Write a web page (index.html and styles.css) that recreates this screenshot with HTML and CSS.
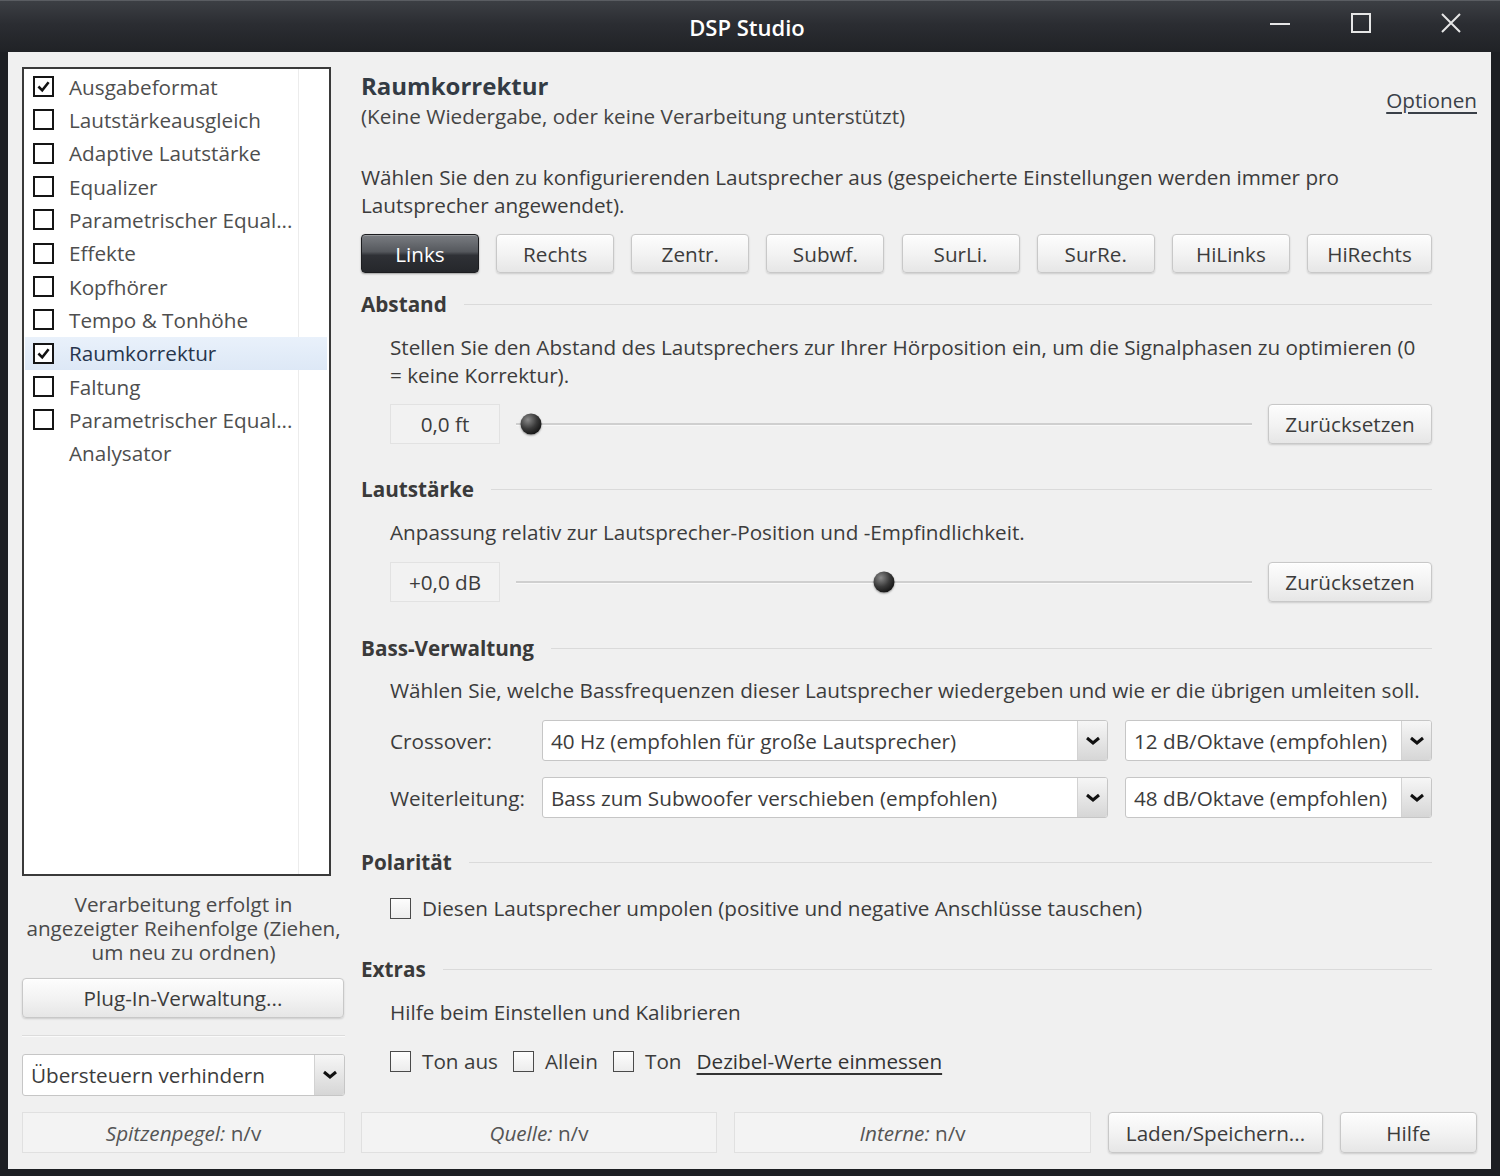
FILE: index.html
```html
<!DOCTYPE html>
<html lang="de">
<head>
<meta charset="utf-8">
<title>DSP Studio</title>
<link rel="stylesheet" href="styles.css">
</head>
<body>
<div class="window">
  <header class="titlebar">
    <div class="title">DSP Studio</div>
    <div class="controls">
      <div class="ctl"><svg width="22" height="22" viewBox="0 0 22 22"><path d="M1 12 H21" stroke="#e6e6e6" stroke-width="2"/></svg></div>
      <div class="ctl"><svg width="22" height="22" viewBox="0 0 22 22"><rect x="2" y="2" width="18" height="18" fill="none" stroke="#e6e6e6" stroke-width="2"/></svg></div>
      <div class="ctl close"><svg width="22" height="22" viewBox="0 0 22 22"><path d="M2 2 L20 20 M20 2 L2 20" stroke="#e6e6e6" stroke-width="2"/></svg></div>
    </div>
  </header>

  <div class="client">
    <aside class="left">
      <ul class="plugin-list">
        <li><span class="lcb checked"><svg viewBox="0 0 20 20"><path d="M4 10 L8.5 14.5 L16 5" fill="none" stroke="#111" stroke-width="3"/></svg></span>Ausgabeformat</li>
        <li><span class="lcb"></span>Lautstärkeausgleich</li>
        <li><span class="lcb"></span>Adaptive Lautstärke</li>
        <li><span class="lcb"></span>Equalizer</li>
        <li><span class="lcb"></span>Parametrischer Equal...</li>
        <li><span class="lcb"></span>Effekte</li>
        <li><span class="lcb"></span>Kopfhörer</li>
        <li><span class="lcb"></span>Tempo &amp; Tonhöhe</li>
        <li class="selected"><span class="lcb checked"><svg viewBox="0 0 20 20"><path d="M4 10 L8.5 14.5 L16 5" fill="none" stroke="#111" stroke-width="3"/></svg></span>Raumkorrektur</li>
        <li><span class="lcb"></span>Faltung</li>
        <li><span class="lcb"></span>Parametrischer Equal...</li>
        <li><span class="lcb none"></span>Analysator</li>
      </ul>
      <p class="hint">Verarbeitung erfolgt in<br>angezeigter Reihenfolge (Ziehen,<br>um neu zu ordnen)</p>
      <button class="btn plug">Plug-In-Verwaltung...</button>
      <div class="sep"></div>
      <div class="select sel-left">
        <span class="val">Übersteuern verhindern</span>
        <span class="arrow"><svg width="16" height="10" viewBox="0 0 16 10"><path d="M2 2 L8 7 L14 2" fill="none" stroke="#111" stroke-width="3"/></svg></span>
      </div>
      <div class="status"><i>Spitzenpegel:</i>&nbsp;n/v</div>
    </aside>

    <main class="right">
      <div class="head">
        <div>
          <h1 class="h-title">Raumkorrektur</h1>
          <div class="sub">(Keine Wiedergabe, oder keine Verarbeitung unterstützt)</div>
        </div>
        <a class="link opt">Optionen</a>
      </div>

      <div class="content">
        <p class="intro">Wählen Sie den zu konfigurierenden Lautsprecher aus (gespeicherte Einstellungen werden immer pro<br>Lautsprecher angewendet).</p>

        <div class="speakers">
          <button class="btn spk active">Links</button>
          <button class="btn spk">Rechts</button>
          <button class="btn spk">Zentr.</button>
          <button class="btn spk">Subwf.</button>
          <button class="btn spk">SurLi.</button>
          <button class="btn spk">SurRe.</button>
          <button class="btn spk">HiLinks</button>
          <button class="btn spk wide">HiRechts</button>
        </div>

        <div class="sec-h s-abstand">Abstand</div>
        <p class="desc d-abstand">Stellen Sie den Abstand des Lautsprechers zur Ihrer Hörposition ein, um die Signalphasen zu optimieren (0<br>= keine Korrektur).</p>
        <div class="slider-row r-abstand">
          <div class="valbox">0,0 ft</div>
          <div class="track"><span class="thumb" style="left:2.05%"></span></div>
          <button class="btn reset">Zurücksetzen</button>
        </div>

        <div class="sec-h s-laut">Lautstärke</div>
        <p class="desc d-laut">Anpassung relativ zur Lautsprecher-Position und -Empfindlichkeit.</p>
        <div class="slider-row r-laut">
          <div class="valbox">+0,0 dB</div>
          <div class="track"><span class="thumb" style="left:50%"></span></div>
          <button class="btn reset">Zurücksetzen</button>
        </div>

        <div class="sec-h s-bass">Bass-Verwaltung</div>
        <p class="desc d-bass">Wählen Sie, welche Bassfrequenzen dieser Lautsprecher wiedergeben und wie er die übrigen umleiten soll.</p>
        <div class="field-row f-cross">
          <span class="flabel">Crossover:</span>
          <div class="select sel-a">
            <span class="val">40 Hz (empfohlen für große Lautsprecher)</span>
            <span class="arrow"><svg width="16" height="10" viewBox="0 0 16 10"><path d="M2 2 L8 7 L14 2" fill="none" stroke="#111" stroke-width="3"/></svg></span>
          </div>
          <div class="select sel-b">
            <span class="val">12 dB/Oktave (empfohlen)</span>
            <span class="arrow"><svg width="16" height="10" viewBox="0 0 16 10"><path d="M2 2 L8 7 L14 2" fill="none" stroke="#111" stroke-width="3"/></svg></span>
          </div>
        </div>
        <div class="field-row f-weiter">
          <span class="flabel">Weiterleitung:</span>
          <div class="select sel-a">
            <span class="val">Bass zum Subwoofer verschieben (empfohlen)</span>
            <span class="arrow"><svg width="16" height="10" viewBox="0 0 16 10"><path d="M2 2 L8 7 L14 2" fill="none" stroke="#111" stroke-width="3"/></svg></span>
          </div>
          <div class="select sel-b">
            <span class="val">48 dB/Oktave (empfohlen)</span>
            <span class="arrow"><svg width="16" height="10" viewBox="0 0 16 10"><path d="M2 2 L8 7 L14 2" fill="none" stroke="#111" stroke-width="3"/></svg></span>
          </div>
        </div>

        <div class="sec-h s-pol">Polarität</div>
        <div class="check-row c-pol">
          <span class="chk"></span><span>Diesen Lautsprecher umpolen (positive und negative Anschlüsse tauschen)</span>
        </div>

        <div class="sec-h s-extras">Extras</div>
        <p class="desc d-extras">Hilfe beim Einstellen und Kalibrieren</p>
        <div class="check-row c-extras">
          <span class="chk"></span><span class="cl">Ton aus</span>
          <span class="chk"></span><span class="cl">Allein</span>
          <span class="chk"></span><span class="cl">Ton</span>
          <a class="link">Dezibel-Werte einmessen</a>
        </div>
      </div>

      <div class="bottom">
        <div class="status st-q"><i>Quelle:</i>&nbsp;n/v</div>
        <div class="status st-i"><i>Interne:</i>&nbsp;n/v</div>
        <button class="btn b-load">Laden/Speichern...</button>
        <button class="btn b-help">Hilfe</button>
      </div>
    </main>
  </div>
</div>
</body>
</html>
```

FILE: styles.css
```css
* { box-sizing: border-box; margin: 0; padding: 0; }
html, body { width: 1500px; height: 1176px; overflow: hidden; }
body {
  background: #1c1e22;
  font-family: "Open Sans", "Noto Sans", "DejaVu Sans", sans-serif;
  font-size: 20.7px;
  color: #3c3c3c;
}

.window {
  width: 1500px;
  height: 1176px;
  display: flex;
  flex-direction: column;
  background: #1d1f23;
  border-top: 1px solid #5a5d62;
}

/* title bar */
.titlebar {
  height: 51px;
  display: grid;
  grid-template-columns: 1fr auto 1fr;
  align-items: start;
  background: linear-gradient(#3c3f44, #2b2d32 45%, #202226);
}
.title {
  grid-column: 2;
  color: #fff;
  font-weight: 600;
  font-size: 22px;
  line-height: 52px;
  margin-left: -6px;
}
.controls {
  grid-column: 3;
  justify-self: end;
  display: flex;
  gap: 1px;
}
.ctl {
  width: 80px;
  height: 43px;
  display: flex;
  align-items: center;
  justify-content: center;
}
.ctl.close { width: 98px; }

/* client area */
.client {
  margin: 0 9px 0 8px;
  height: 1117px;
  background: #f0f0f0;
  display: flex;
  gap: 16px;
  padding: 15px 14px 16px 14px;
}

/* left column */
.left {
  width: 323px;
  display: flex;
  flex-direction: column;
}
.plugin-list {
  list-style: none;
  width: 309px;
  height: 809px;
  border: 2px solid #3a3a3a;
  padding-top: 1px;
  background:
    linear-gradient(to right, transparent 274px, #ececec 274px, #ececec 275px, transparent 275px),
    #fff;
}
.plugin-list li {
  height: 33.33px;
  display: flex;
  align-items: center;
  gap: 15px;
  padding-left: 9px;
  color: #4e4e4e;
  white-space: nowrap;
}
.plugin-list li.selected {
  background: linear-gradient(#e9f1fb, #dde8f6);
  margin: 0 2px 0 1px;
  padding-left: 8px;
  color: #27354d;
}
.lcb {
  width: 21px;
  height: 21px;
  border: 2.5px solid #151515;
  background: #fff;
  display: flex;
  align-items: center;
  justify-content: center;
  flex: none;
}
.lcb svg { width: 17px; height: 17px; }
.lcb.none { border-color: transparent; background: transparent; }

.hint {
  margin-top: 16px;
  text-align: center;
  line-height: 24px;
  font-size: 20.7px;
  color: #4a4a4a;
  white-space: nowrap;
  margin-left: -6px;
  margin-right: -6px;
}

.btn {
  font: inherit;
  color: #3c3c3c;
  background: linear-gradient(#fdfdfd, #f3f3f3 50%, #e6e6e6);
  border: 1px solid #c8c8c8;
  border-radius: 4px;
  box-shadow: 0 1px 2px rgba(0,0,0,0.15), inset 0 1px 0 #fff;
  display: flex;
  align-items: center;
  justify-content: center;
  white-space: nowrap;
}
.plug {
  margin-top: 14px;
  width: 322px;
  height: 40px;
}
.sep {
  margin-top: 17px;
  height: 2px;
  border-top: 1px solid #dcdcdc;
  border-bottom: 1px solid #fafafa;
}

.select {
  display: flex;
  background: #fff;
  border: 1px solid #c6c6c6;
  border-radius: 3px;
  overflow: hidden;
}
.select .val {
  flex: 1;
  display: flex;
  align-items: center;
  padding-left: 8px;
  color: #3c3c3c;
  white-space: nowrap;
}
.select .arrow {
  width: 30px;
  flex: none;
  border-left: 1px solid #d2d2d2;
  background: linear-gradient(#f6f6f6, #e6e6e6 50%, #d6d6d6);
  display: flex;
  align-items: center;
  justify-content: center;
}
.sel-left {
  margin-top: 17px;
  height: 42px;
  width: 323px;
}

.status {
  height: 41px;
  border: 1px solid #e0e0e0;
  background: #f3f3f3;
  display: flex;
  align-items: center;
  justify-content: center;
  color: #555;
  white-space: nowrap;
}
.left .status { margin-top: 16px; width: 323px; }

/* right column */
.right {
  width: 1116px;
  display: flex;
  flex-direction: column;
}
.head {
  display: flex;
  justify-content: space-between;
  align-items: flex-start;
}
.h-title {
  font-size: 24px;
  font-weight: 700;
  line-height: 30px;
  padding-top: 4px;
  color: #333b44;
}
.sub {
  margin-top: 1px;
  line-height: 28px;
  color: #444;
}
.link {
  color: #333;
  text-decoration: underline;
  text-underline-offset: 4px;
}
.opt {
  margin-top: 19px;
  line-height: 28px;
  color: #3a4048;
}

.content {
  width: 1071px;
  display: flex;
  flex-direction: column;
}
.intro {
  margin-top: 33px;
  line-height: 28px;
  color: #3c3c3c;
  white-space: nowrap;
}
.speakers {
  margin-top: 15px;
  display: flex;
  justify-content: space-between;
}
.spk {
  width: 118px;
  height: 39px;
}
.spk.wide { width: 125px; }
.spk.active {
  color: #fff;
  border-color: #1c1d20;
  background: linear-gradient(#7a7d82, #55585d 45%, #2f3136 55%, #25272b);
  box-shadow: 0 1px 2px rgba(0,0,0,0.35), inset 0 1px 0 rgba(255,255,255,0.25);
}

.sec-h {
  display: flex;
  align-items: center;
  gap: 17px;
  font-weight: 700;
  line-height: 28px;
  color: #3a3a3a;
}
.sec-h::after {
  content: "";
  flex: 1;
  height: 1px;
  background: #dadada;
}
.desc {
  padding-left: 29px;
  line-height: 28px;
  color: #3c3c3c;
  white-space: nowrap;
}

.s-abstand { margin-top: 17px; }
.d-abstand { margin-top: 15px; }
.r-abstand { margin-top: 15px; }
.s-laut { margin-top: 31px; }
.d-laut { margin-top: 15px; }
.r-laut { margin-top: 16px; }
.s-bass { margin-top: 32px; }
.d-bass { margin-top: 14px; }
.f-cross { margin-top: 16px; }
.f-weiter { margin-top: 16px; }
.s-pol { margin-top: 30px; }
.c-pol { margin-top: 18px; }
.s-extras { margin-top: 33px; }
.d-extras { margin-top: 15px; }
.c-extras { margin-top: 21px; }

.slider-row {
  display: flex;
  align-items: center;
  padding-left: 29px;
  height: 40px;
}
.valbox {
  width: 110px;
  height: 40px;
  border: 1px solid #e2e2e2;
  background: #f2f2f2;
  display: flex;
  align-items: center;
  justify-content: center;
  color: #3c3c3c;
  white-space: nowrap;
}
.track {
  flex: 1;
  margin: 0 16px;
  height: 3px;
  background: #cfcfcf;
  border-bottom: 1px solid #f8f8f8;
  position: relative;
}
.thumb {
  position: absolute;
  top: 50%;
  width: 21px;
  height: 21px;
  border-radius: 50%;
  transform: translate(-50%, -50%);
  background: radial-gradient(circle at 35% 30%, #8a8a8a, #3a3a3a 45%, #111 80%);
  box-shadow: 0 1px 2px rgba(0,0,0,0.4);
}
.reset {
  width: 164px;
  height: 40px;
}

.field-row {
  display: flex;
  align-items: center;
  padding-left: 29px;
  gap: 17px;
}
.flabel {
  width: 135px;
  white-space: nowrap;
  color: #3c3c3c;
}
.field-row .select { height: 41px; }
.sel-a { width: 566px; }
.sel-b { width: 307px; }

.check-row {
  display: flex;
  align-items: center;
  padding-left: 29px;
  line-height: 28px;
  gap: 11px;
  white-space: nowrap;
}
.chk {
  width: 21px;
  height: 21px;
  border: 1.5px solid #4a4a4a;
  background: linear-gradient(#fdfdfd, #ececec);
  flex: none;
}
.c-extras .cl { margin-right: 4px; }

.bottom {
  margin-top: auto;
  display: flex;
  justify-content: space-between;
  height: 41px;
}
.st-q { width: 356px; }
.st-i { width: 357px; }
.b-load { width: 215px; height: 41px; }
.b-help { width: 137px; height: 41px; }
```
